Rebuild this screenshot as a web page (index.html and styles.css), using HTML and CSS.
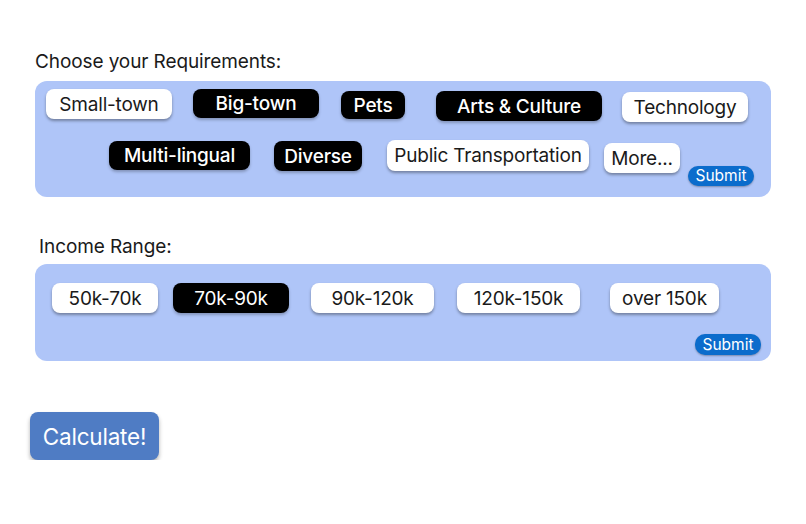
FILE: index.html
```html
<!DOCTYPE html>
<html>
<head>
<meta charset="utf-8">
<link rel="stylesheet" href="styles.css">
</head>
<body>
<div class="page">
  <h2 class="label req-label">Choose your Requirements:</h2>
  <div class="panel req-panel">
    <div class="row row1">
      <span class="chip light c-small">Small-town</span>
      <span class="chip dark c-big">Big-town</span>
      <span class="chip dark c-pets">Pets</span>
      <span class="chip dark c-arts">Arts &amp; Culture</span>
      <span class="chip light c-tech">Technology</span>
    </div>
    <div class="row row2">
      <span class="chip dark c-multi">Multi-lingual</span>
      <span class="chip dark c-diverse">Diverse</span>
      <span class="chip light c-public">Public Transportation</span>
      <span class="chip light c-more">More...</span>
      <span class="submit s1">Submit</span>
    </div>
  </div>

  <h2 class="label inc-label">Income Range:</h2>
  <div class="panel inc-panel">
    <div class="row row-inc">
      <span class="chip light i1">50k-70k</span>
      <span class="chip dark i2">70k-90k</span>
      <span class="chip light i3">90k-120k</span>
      <span class="chip light i4">120k-150k</span>
      <span class="chip light i5">over 150k</span>
    </div>
    <div class="submit-row">
      <span class="submit s2">Submit</span>
    </div>
  </div>

  <div class="calc-wrap">
    <button class="calc">Calculate!</button>
  </div>
</div>
</body>
</html>
```

FILE: styles.css
```css
html, body {
  margin: 0;
  padding: 0;
  background: #ffffff;
}
body {
  font-family: Inter, "Noto Sans", sans-serif;
  color: #111;
}
.page {
  padding-left: 35px;
  width: 736px;
}
.label {
  font-size: 19px;
  font-weight: 400;
  line-height: 22px;
  margin: 0;
  color: #1a1a1a;
  letter-spacing: -0.1px;
}
.req-label {
  padding-top: 51px;
  height: 30px;
}
.inc-label {
  padding-top: 39px;
  padding-left: 4px;
  height: 28px;
}
.panel {
  background: #afc5f8;
  border-radius: 12px;
  box-sizing: border-box;
}
.req-panel {
  height: 116px;
  padding: 8px 0 0 11px;
}
.inc-panel {
  height: 97px;
  padding: 19px 10px 0 17px;
}
.row {
  display: flex;
  align-items: flex-start;
}
.row1 { height: 30px; }
.chip {
  display: inline-flex;
  align-items: center;
  justify-content: center;
  box-sizing: border-box;
  height: 30px;
  border-radius: 8px;
  font-size: 19px;
  line-height: 1;
  white-space: nowrap;
  letter-spacing: -0.2px;
}
.chip.light {
  background: #ffffff;
  color: #1a1a1a;
  font-weight: 400;
  box-shadow: 0 2px 3px rgba(0,0,0,0.35);
}
.chip.dark {
  background: #000000;
  color: #ffffff;
  font-weight: 500;
  box-shadow: 0 2px 3px rgba(0,0,0,0.25);
}
/* row 1 */
.c-small { width: 126px; }
.c-big { width: 126px; margin-left: 21px; height: 29px; }
.c-pets { width: 64px; margin-left: 22px; margin-top: 2px; height: 28px; }
.c-arts { width: 166px; margin-left: 31px; margin-top: 2px; }
.c-tech { width: 126px; margin-left: 20px; margin-top: 3px; }
/* row 2 */
.row2 { margin-top: 21px; padding-left: 63px; }
.c-multi { width: 141px; height: 29px; margin-top: 1px; }
.c-diverse { width: 88px; margin-left: 24px; margin-top: 1px; }
.c-public { width: 202px; margin-left: 25px; height: 31px; }
.c-more { width: 76px; margin-left: 15px; margin-top: 3px; }
.submit {
  display: inline-flex;
  align-items: center;
  justify-content: center;
  background: #0b6ccc;
  color: #ffffff;
  font-size: 15.5px;
  height: 20px;
  width: 66px;
  border-radius: 10px;
  line-height: 1;
  box-shadow: 0 1px 2px rgba(0,0,0,0.3);
}
.s1 { margin-left: 8px; margin-top: 26px; }
/* income */
.i1 { width: 106px; }
.i2 { width: 116px; margin-left: 15px; }
.i3 { width: 123px; margin-left: 22px; }
.i4 { width: 123px; margin-left: 23px; }
.i5 { width: 109px; margin-left: 30px; }
.chip.i2 { font-weight: 400; }
.submit-row {
  display: flex;
  justify-content: flex-end;
  margin-top: 21px;
}
.s2 { height: 21px; }
.calc-wrap {
  padding-top: 51px;
  margin-left: -5px;
}
.calc {
  width: 129px;
  height: 48px;
  border: none;
  border-radius: 8px;
  background: #4f7cc4;
  color: #ffffff;
  font-family: Inter, "Noto Sans", sans-serif;
  font-size: 22.5px;
  font-weight: 400;
  padding: 0;
  box-shadow: 0 3px 4px rgba(0,0,0,0.3);
  letter-spacing: -0.2px;
}
```
